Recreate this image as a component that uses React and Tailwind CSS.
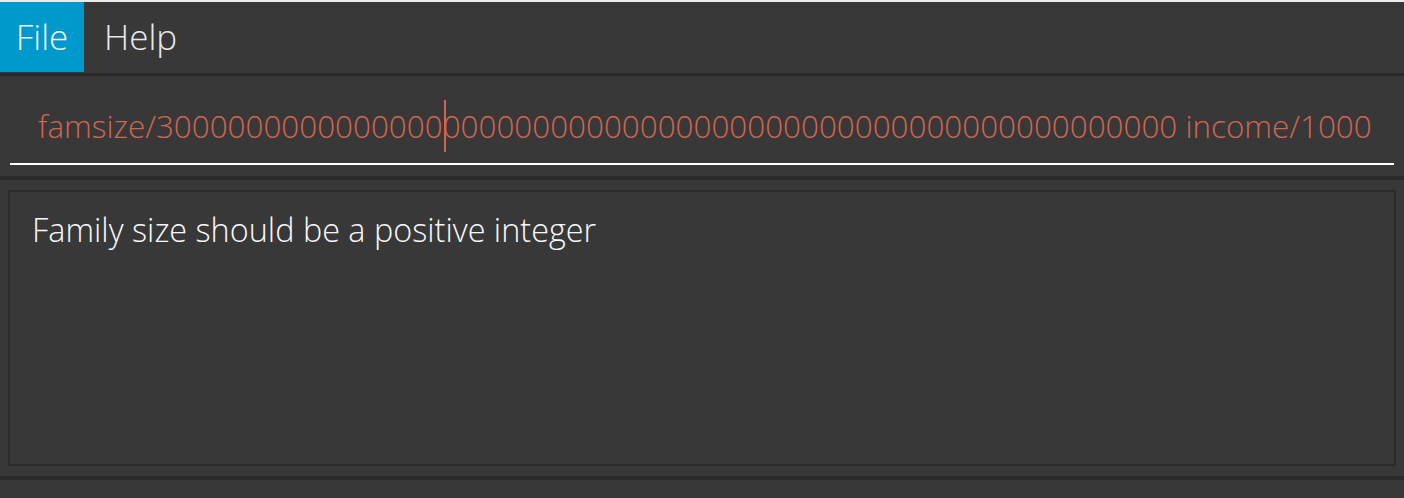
import React from 'react';

const FONT = { fontFamily: '"Open Sans", "Noto Sans", sans-serif' };

const MenuBar = () => (
  <div className="flex h-[70px] items-stretch">
    <div className="flex w-[84px] items-center justify-center bg-[#0099cc] text-[35px] font-light text-[#f0f0f0]">
      File
    </div>
    <div className="flex items-center pl-[20px] text-[35px] font-light text-[#e8e8e8]">Help</div>
  </div>
);

const CommandBox = () => (
  <div className="h-[100px]">
    <div className="flex h-[87px] items-center overflow-hidden whitespace-nowrap pl-[38px] pt-[13px] text-[31.4px] font-light text-[#d06651]">
      <span>famsize/3000000000000000</span>
      <span className="-mr-[3px] ml-[1px] inline-block h-[52px] w-[2px] bg-[#d06651]" />
      <span>00000000000000000000000000000000000000000 income/1000</span>
    </div>
    <div className="mx-[10px] h-[2px] bg-white" />
  </div>
);

const ResultBox = () => (
  <div className="flex h-[296px] flex-col px-[8px] pt-[10px]">
    <div className="h-[276px] border-2 border-[#2b2b2b] px-[22px] pt-[13px] text-[32.4px] font-light text-[#f8f8f8]">
      Family size should be a positive integer
    </div>
  </div>
);

export default function App() {
  return (
    <div className="h-[498px] w-[1404px] overflow-hidden border-t-2 border-[#ececec] bg-[#383838]" style={FONT}>
      <MenuBar />
      <div className="mt-[1px] h-[3px] bg-[#2b2b2b]" />
      <CommandBox />
      <div className="h-[4px] bg-[#2b2b2b]" />
      <ResultBox />
      <div className="h-[4px] bg-[#2b2b2b]" />
    </div>
  );
}
